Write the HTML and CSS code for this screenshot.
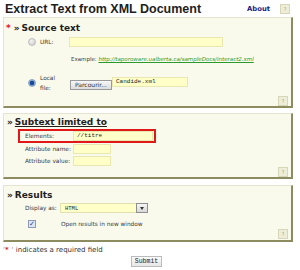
FILE: index.html
```html
<!DOCTYPE html>
<html>
<head>
<meta charset="utf-8">
<link rel="stylesheet" href="styles.css">
</head>
<body>
<div class="page">
  <div class="topbar">
    <h1 class="title">Extract Text from XML Document</h1>
    <a class="about" href="#">About</a>
    <span class="help">?</span>
  </div>

  <div class="panel p1">
    <div class="phead"><span class="req">*</span><span class="raq">»</span>Source text</div>
    <div class="row url-row">
      <span class="radio"></span>
      <span class="lbl lbl-url">URL:</span>
      <span class="field url-field"></span>
    </div>
    <div class="example">Example: <a href="#">http://taporoware.ualberta.ca/sampleDocs/interact2.xml</a></div>
    <div class="row file-row">
      <span class="radio on"></span>
      <span class="lbl lbl-file">Local<br>file:</span>
      <span class="browse">Parcourir...</span>
      <span class="field mono file-field">Candide.xml</span>
    </div>
    <div class="foot"><span class="help">?</span></div>
  </div>

  <div class="panel p2">
    <div class="phead"><span class="raq">»</span><u>Subtext limited to</u></div>
    <div class="hl">
      <span class="lbl lbl-w">Elements:</span>
      <span class="field mono el-field">//titre</span>
    </div>
    <div class="row attr a1">
      <span class="lbl lbl-w">Attribute name:</span>
      <span class="field short"></span>
    </div>
    <div class="row attr">
      <span class="lbl lbl-w">Attribute value:</span>
      <span class="field short"></span>
    </div>
    <div class="foot f2"><span class="help">?</span></div>
  </div>

  <div class="panel p3">
    <div class="phead"><span class="raq">»</span>Results</div>
    <div class="row disp">
      <span class="lbl lbl-d">Display as:</span>
      <span class="select"><span class="mono">HTML</span><span class="arrow"><span class="tri"></span></span></span>
    </div>
    <div class="row chk-row">
      <span class="chk">✓</span>
      <span class="lbl chk-lbl">Open results in new window</span>
    </div>
    <div class="foot f3"><span class="help">?</span></div>
  </div>

  <div class="note"><span class="q">'<span class="req">*</span>'</span> indicates a required field</div>
  <div class="submit-wrap"><span class="submit">Submit</span></div>
</div>
</body>
</html>
```
FILE: styles.css
```css
* { box-sizing: border-box; }
html, body { margin: 0; padding: 0; background: #ffffff; }
body { font-family: "DejaVu Sans", Verdana, sans-serif; color: #222; width: 300px; height: 270px; overflow: hidden; white-space: nowrap; }
.page { padding: 1px 0 0 3px; width: 293px; }

.topbar { display: flex; align-items: center; height: 15px; }
.title { font-family: "Liberation Sans", Arial, sans-serif; font-size: 12.5px; font-weight: bold; margin: 0 0 0 2px; color: #1e1e1e; flex: 1; white-space: nowrap; }
.about { font-size: 6.8px; font-weight: bold; color: #1a1a80; text-decoration: none; margin-right: 10px; }
.help { display: inline-flex; width: 10px; height: 10px; align-items: center; justify-content: center; font-size: 5px; color: #9a9a70; background: #eeeed8; border: 1px solid #d6d6b8; }
.topbar .help { margin-right: 3px; }

.panel { background: #f9f9ec; border-top: 1px solid #e4e4d0; border-left: 1px solid #e4e4d0; border-right: 2px solid #8c8c60; border-bottom: 2px solid #8c8c60; width: 290px; }
.p1 { margin-top: 1px; height: 91px; padding: 5px 0 0 2px; }
.p2 { margin-top: 5px; height: 66px; padding: 3px 0 0 3px; }
.p3 { margin-top: 6px; height: 57px; padding: 4px 0 0 3px; }

.phead { font-size: 9px; font-weight: bold; color: #1e1e1e; height: 11px; line-height: 11px; }
.req { color: #e02020; font-weight: bold; margin-right: 3px; }
.raq { font-weight: bold; margin-right: 2px; }

.row { display: flex; align-items: center; }
.lbl { font-size: 5.8px; color: #3a3a3a; }
.field { display: block; background: #ffffc8; border: 1px solid #e8e8b0; height: 10px; font-size: 6px; line-height: 8px; padding-left: 3px; }
.mono { font-family: "Liberation Mono", "DejaVu Sans Mono", monospace; font-size: 6px; color: #222; }

.radio { width: 8px; height: 8px; border-radius: 50%; background: radial-gradient(circle at 40% 35%, #f4f4f4, #c8c8c8); border: 1px solid #bdbdbd; }
.radio.on { background: radial-gradient(circle, #1a4a9a 0 2px, #7aa0d0 2.5px, #c8d6ea 4px); border-color: #8aa0c0; }

.url-row { margin-top: 3px; padding-left: 22px; }
.lbl-url { width: 29px; margin-left: 4px; }
.url-field { width: 154px; }

.example { font-size: 5.5px; color: #3a3a3a; margin: 9px 0 0 65px; }
.example a { color: #2a9a2a; font-style: italic; }

.file-row { margin-top: 11px; padding-left: 22px; }
.lbl-file { width: 30px; margin-left: 4px; line-height: 10px; }
.browse { font-size: 6px; color: #333; background: linear-gradient(#f8f8f8, #dcdcdc); border: 1px solid #9a9a9a; height: 10px; line-height: 8px; padding: 0 4px; width: 42px; margin-top: 3px; }
.file-field { width: 76px; margin-top: -3px; }

.foot { display: flex; justify-content: flex-end; padding-right: 3px; margin-top: 3px; }
.f2 { margin-top: 1px; }
.f3 { margin-top: 1px; }

.hl { display: flex; align-items: center; border: 2px solid #e01818; width: 138px; height: 14px; margin: 1px 0 0 11px; padding-left: 5px; }
.lbl-w { width: 48px; }
.el-field { width: 80px; }
.attr { margin-top: 2px; padding-left: 18px; }
.a1 { margin-top: 1px; }
.short { width: 38px; }

.disp { margin-top: 2px; padding-left: 18px; }
.lbl-d { width: 35px; }
.select { display: flex; align-items: center; justify-content: space-between; width: 88px; height: 10px; background: #ffffc8; border: 1px solid #e0e0b0; padding-left: 4px; }
.select .mono { font-size: 5.5px; }
.arrow { width: 12px; height: 10px; background: linear-gradient(#f6f6f6, #d8d8d8); border: 1px solid #909090; display: flex; align-items: center; justify-content: center; margin-right: -1px; }
.tri { width: 0; height: 0; border-left: 2.5px solid transparent; border-right: 2.5px solid transparent; border-top: 3px solid #333; }

.chk-row { margin-top: 7px; padding-left: 21px; }
.chk { width: 8px; height: 8px; border: 1px solid #8a9ab8; background: #dde6f2; font-size: 7px; line-height: 6px; color: #2a4a8a; text-align: center; }
.chk-lbl { margin-left: 25px; }

.note { font-size: 7px; color: #333; margin-top: 4px; }
.q { color: #888; }
.submit-wrap { display: flex; justify-content: center; margin-top: 2px; }
.submit { font-family: "Liberation Mono", monospace; font-size: 6.5px; border: 1px solid #bbb; background: linear-gradient(#fafafa, #e6e6e6); padding: 1px 3px; height: 11px; line-height: 8px; margin-left: -3px; }
```
